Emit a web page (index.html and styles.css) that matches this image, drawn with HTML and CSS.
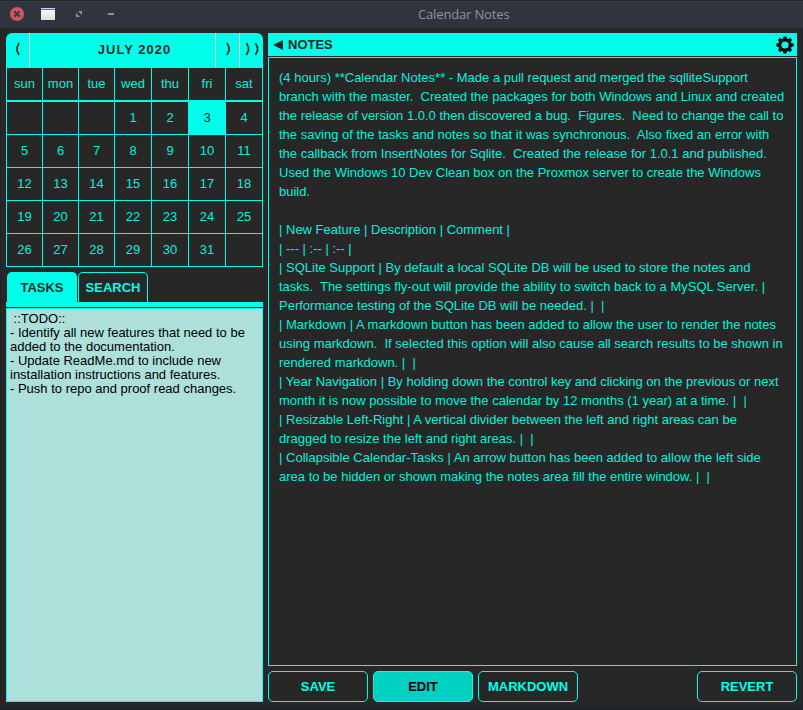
FILE: index.html
```html
<!DOCTYPE html>
<html lang="en">
<head>
<meta charset="utf-8">
<title>Calendar Notes</title>
<link rel="stylesheet" href="styles.css">
</head>
<body>
<div class="window">
  <header class="titlebar">
    <svg class="controls" width="130" height="28" viewBox="0 0 130 28">
      <defs><linearGradient id="g" x1="0" y1="0" x2="0" y2="1"><stop offset="0" stop-color="#fff"/><stop offset="1" stop-color="#deded8"/></linearGradient></defs>
      <circle cx="17" cy="14" r="7.1" fill="#cc575d"/>
      <path d="M14.4 11.4l5.2 5.2M19.6 11.4l-5.2 5.2" stroke="#2f343f" stroke-width="1.8"/>
      <rect x="41" y="8" width="14" height="12" fill="url(#g)"/>
      <rect x="41" y="8" width="14" height="1" fill="#c4d4e8"/>
      <rect x="41" y="9" width="14" height="1" fill="#456fa8"/>
      <path d="M78 11h4v4zM76 13l4 4h-4z" fill="#90939b"/>
      <rect x="108" y="13" width="6" height="2" fill="#90939b"/>
    </svg>
    <h1 class="title">Calendar Notes</h1>
  </header>
  <main class="content">
    <aside class="left">
      <div class="month">
        <button class="nav prev"><svg width="6" height="14" viewBox="0 0 6 14"><path d="M4 1.2L2 5.500v3L4 12.800"/></svg></button>
        <span class="month-name">JULY 2020</span>
        <button class="nav next"><svg width="6" height="14" viewBox="0 0 6 14"><path d="M2 1.2L4 5.500v3L2 12.800"/></svg></button>
        <button class="nav last"><svg width="16" height="14" viewBox="0 0 16 14"><path d="M2.500 1.200L4.500 5.500v3L2.500 12.800M11.500 1.200L13.500 5.500v3L11.500 12.800"/></svg></button>
      </div>
      <div class="grid">
        <span class="day">sun</span><span class="day">mon</span><span class="day">tue</span><span class="day">wed</span><span class="day">thu</span><span class="day">fri</span><span class="day">sat</span>
        <span></span><span></span><span></span><span>1</span><span>2</span><span class="today">3</span><span>4</span>
        <span>5</span><span>6</span><span>7</span><span>8</span><span>9</span><span>10</span><span>11</span>
        <span>12</span><span>13</span><span>14</span><span>15</span><span>16</span><span>17</span><span>18</span>
        <span>19</span><span>20</span><span>21</span><span>22</span><span>23</span><span>24</span><span>25</span>
        <span>26</span><span>27</span><span>28</span><span>29</span><span>30</span><span>31</span><span></span>
      </div>
      <nav class="tabs"><button class="tab active">TASKS</button><button class="tab">SEARCH</button></nav>
      <div class="tasks"> ::TODO::
- Identify all new features that need to be
added to the documentation.
- Update ReadMe.md to include new
installation instructions and features.
- Push to repo and proof read changes.</div>
    </aside>
    <section class="right">
      <div class="notes-head">
        <svg width="10" height="10" viewBox="0 0 10 10"><path d="M0 5L10 0v10z" fill="#272727"/></svg>
        <h2>NOTES</h2>
        <svg class="gear" width="18" height="18" viewBox="-9 -9 18 18">
          <circle r="5.200" fill="none" stroke="#0b0b0b" stroke-width="3.200"/>
          <g fill="#0b0b0b"><path id="t" d="M-2.100-5.500L-1.500-8.600h3L2.100-5.500z"/><use href="#t" transform="rotate(45)"/><use href="#t" transform="rotate(90)"/><use href="#t" transform="rotate(135)"/><use href="#t" transform="rotate(180)"/><use href="#t" transform="rotate(225)"/><use href="#t" transform="rotate(270)"/><use href="#t" transform="rotate(315)"/></g>
        </svg>
      </div>
      <div class="notes">(4 hours) **Calendar Notes** - Made a pull request and merged the sqlliteSupport
branch with the master.  Created the packages for both Windows and Linux and created
the release of version 1.0.0 then discovered a bug.  Figures.  Need to change the call to
<span class="loose">the saving of the tasks and notes so that it was synchronous.  Also fixed an error with</span>
the callback from InsertNotes for Sqlite.  Created the release for 1.0.1 and published.
Used the Windows 10 Dev Clean box on the Proxmox server to create the Windows
build.

| New Feature | Description | Comment |
| --- | :-- | :-- |
| SQLite Support | By default a local SQLite DB will be used to store the notes and
tasks.  The settings fly-out will provide the ability to switch back to a MySQL Server. |
Performance testing of the SQLite DB will be needed. |  |
<span class="loose">| Markdown | A markdown button has been added to allow the user to render the notes</span>
using markdown.  If selected this option will also cause all search results to be shown in
rendered markdown. |  |
| Year Navigation | By holding down the control key and clicking on the previous or next
month it is now possible to move the calendar by 12 months (1 year) at a time. |  |
<span class="loose">| Resizable Left-Right | A vertical divider between the left and right areas can be</span>
dragged to resize the left and right areas. |  |
<span class="loose">| Collapsible Calendar-Tasks | An arrow button has been added to allow the left side</span>
area to be hidden or shown making the notes area fill the entire window. |  |</div>
      <footer class="actions"><button>SAVE</button><button class="selected">EDIT</button><button>MARKDOWN</button><button class="revert">REVERT</button></footer>
    </section>
  </main>
</div>
</body>
</html>
```

FILE: styles.css
```css
* { box-sizing: border-box; }
body { margin: 0; background: #20242a; font: 13px "Liberation Sans", sans-serif; color: #00ffea; }
button { margin: 0; padding: 0; border: 0; background: none; font: bold 13px "Liberation Sans", sans-serif; color: inherit; }
.window { height: 710px; display: flex; flex-direction: column; padding: 0 1px 3px; overflow: hidden; }
.titlebar { height: 28px; flex: none; margin: 0 -1px; display: grid; grid-template-columns: 130px 1fr; background: #2f343f; border-top: 1px solid #20242c; box-shadow: inset 0 1px #353b48; }
.controls { margin-top: -1px; }
.title { margin: 0; padding-left: 288px; font: 13px/26px "Open Sans", sans-serif; letter-spacing: -0.15px; color: #90939b; }
.content { flex: 1; display: flex; gap: 5px; padding: 5px 5px 5px; background: #272727; min-height: 0; }
.left { width: 257px; display: flex; flex-direction: column; }
.month { height: 35px; flex: none; display: grid; grid-template-columns: 24px 1fr 24px 24px; border-bottom: 1px solid #00ffea; background: #00ffea; border-radius: 6px 6px 0 0; color: #272727; }
.month-name { font-weight: bold; letter-spacing: 1px; text-align: center; line-height: 33px; padding-left: 24px; }
.nav { display: flex; align-items: center; justify-content: center; }
.nav svg { fill: none; stroke: #272727; stroke-width: 1.7; margin-top: -2px; }
.prev { border-right: 1px solid #fff; }
.next, .last { border-left: 1px solid #fff; }
.grid { flex: none; display: grid; grid-template-columns: 36px 36px 36px 37px 37px 37px 37px; grid-template-rows: 34px repeat(5, 33px); border-right: 1px solid #00ffea; color: #04f0dd; }
.grid span { border-left: 1px solid #00ffea; border-bottom: 1px solid #00ffea; text-align: center; line-height: 31px; }
.grid .day { border-bottom-width: 2px; }
.grid .today { background: #00ffea; color: #272727; }
.tabs { height: 35px; margin-top: 5px; flex: none; display: flex; gap: 1px; padding-left: 1px; border-bottom: 5px solid #00ffea; }
.tab { width: 70px; border: 1px solid #00ffea; border-bottom: 0; border-radius: 5px 5px 0 0; }
.tab.active { background: #00ffea; color: #272727; }
.tasks { flex: 1; margin-top: 1px; border: 1px solid #00ffea; padding: 3px; background: #addfdb; color: #000; line-height: 14px; white-space: pre; }
.right { flex: 1; min-width: 0; display: flex; flex-direction: column; }
.notes-head { height: 23px; flex: none; display: flex; align-items: center; padding: 0 3px 0 5px; background: #00ffea; color: #272727; }
.notes-head h2 { margin: 0 0 0 5px; font-size: 13px; }
.gear { margin-left: auto; }
.notes { flex: 1; margin-top: 1px; border: 1px solid #00ffea; padding: 10px; line-height: 19px; white-space: pre; color: #04f0dd; }
.loose { letter-spacing: 0.012px; }
.actions { height: 31px; margin-top: 5px; flex: none; display: flex; gap: 5px; }
.actions button { width: 100px; border: 1px solid #00ffea; border-radius: 5px; }
.actions .selected { background: #00d1c0; color: #000; }
.actions .revert { margin-left: auto; }
```
